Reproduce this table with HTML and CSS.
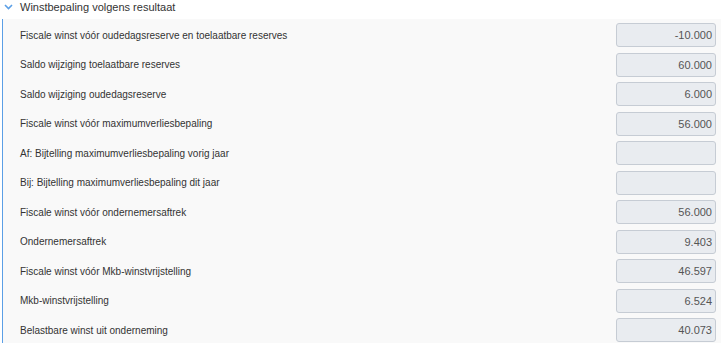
FILE: index.html
```html
<!DOCTYPE html>
<html lang="nl">
<head>
<meta charset="utf-8">
<title>Winstbepaling volgens resultaat</title>
<link rel="stylesheet" href="styles.css">
</head>
<body>
<section class="section">
  <header class="section-head">
    <svg class="chevron" width="9" height="6" viewBox="0 0 9 6" aria-hidden="true"><path d="M1 1 L4.5 4.5 L8 1" fill="none" stroke="#5b9fe6" stroke-width="1.6"/></svg>
    <span class="title">Winstbepaling volgens resultaat</span>
  </header>
  <div class="panel">
    <div class="row"><span class="label">Fiscale winst vóór oudedagsreserve en toelaatbare reserves</span><div class="field">-10.000</div></div>
    <div class="row"><span class="label">Saldo wijziging toelaatbare reserves</span><div class="field">60.000</div></div>
    <div class="row"><span class="label">Saldo wijziging oudedagsreserve</span><div class="field">6.000</div></div>
    <div class="row"><span class="label">Fiscale winst vóór maximumverliesbepaling</span><div class="field">56.000</div></div>
    <div class="row"><span class="label">Af: Bijtelling maximumverliesbepaling vorig jaar</span><div class="field"></div></div>
    <div class="row"><span class="label">Bij: Bijtelling maximumverliesbepaling dit jaar</span><div class="field"></div></div>
    <div class="row"><span class="label">Fiscale winst vóór ondernemersaftrek</span><div class="field">56.000</div></div>
    <div class="row"><span class="label">Ondernemersaftrek</span><div class="field">9.403</div></div>
    <div class="row"><span class="label">Fiscale winst vóór Mkb-winstvrijstelling</span><div class="field">46.597</div></div>
    <div class="row"><span class="label">Mkb-winstvrijstelling</span><div class="field">6.524</div></div>
    <div class="row"><span class="label">Belastbare winst uit onderneming</span><div class="field">40.073</div></div>
  </div>
</section>
</body>
</html>
```
FILE: styles.css
```css
html, body {
  margin: 0;
  padding: 0;
  background: #ffffff;
  font-family: "Liberation Sans", Arial, sans-serif;
  color: #333333;
}
.section {
  width: 721px;
}
.section-head {
  display: flex;
  align-items: center;
  height: 19px;
  padding-left: 4px;
  gap: 7px;
}
.chevron {
  display: block;
  margin-top: -6px;
}
.title {
  font-size: 11px;
  color: #333333;
  margin-top: -6px;
}
.panel {
  margin-left: 2px;
  border-left: 1px solid #5b9fe6;
  background: #f9f9f9;
  padding-top: 1.5px;
  padding-right: 5px;
}
.row {
  height: 29.5px;
  display: flex;
  align-items: center;
  justify-content: space-between;
  padding-left: 17px;
}
.label {
  font-size: 10px;
  color: #333333;
}
.field {
  box-sizing: border-box;
  width: 100px;
  height: 24px;
  background: #e9ecf0;
  border: 1px solid #c6ccd4;
  border-radius: 3px;
  font-size: 11px;
  color: #555555;
  text-align: right;
  line-height: 22px;
  padding-right: 3px;
}
```
